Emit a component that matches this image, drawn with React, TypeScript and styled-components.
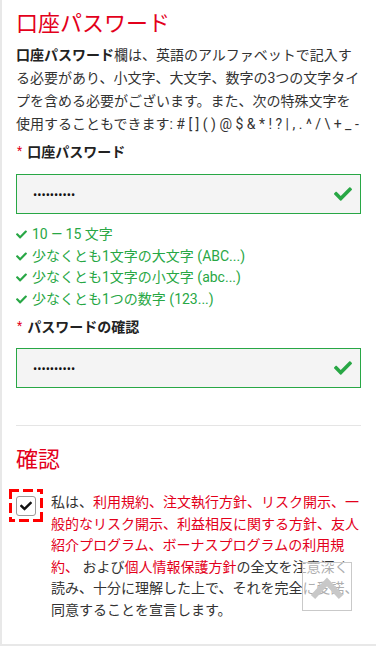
import React from "react";
import styled, { createGlobalStyle } from "styled-components";
import { FaCheck } from "react-icons/fa";

const Global = createGlobalStyle`
  html, body { margin: 0; padding: 0; background: #ffffff; }
  body {
    font-family: Roboto, "Noto Sans CJK JP", "Noto Sans", sans-serif;
    color: #333333;
    -webkit-font-smoothing: antialiased;
  }
  * { box-sizing: border-box; }
`;

const RED = "#e3001b";
const GREEN = "#28a745";
const DASH = "#ff0000";

const Card = styled.main`
  min-height: 646px;
  border-left: 2px solid #e8e8e8;
  border-bottom: 2px solid #e8e8e8;
  padding: 9px 15px 0 14px;
  background: #fff;
  display: flex;
  flex-direction: column;
`;

const Title = styled.h2<{ $top?: number }>`
  margin: ${(p) => p.$top ?? 0}px 0 0;
  font-size: 22px;
  line-height: 30px;
  font-weight: 400;
  color: ${RED};
`;

const Intro = styled.p`
  margin: 5px 0 0;
  font-size: 14px;
  line-height: 23px;
  color: #333;
  b { font-weight: 700; color: #222; }
`;

const Label = styled.label<{ $top: number }>`
  display: flex;
  align-items: baseline;
  margin-top: ${(p) => p.$top}px;
  font-size: 14px;
  line-height: 20px;
  font-weight: 700;
  color: #222;
`;

const Star = styled.span`
  color: ${RED};
  font-size: 12px;
  font-weight: 400;
  margin: 0 5px 0 1px;
  position: relative;
  top: -2px;
`;

const InputBox = styled.div<{ $top: number }>`
  margin-top: ${(p) => p.$top}px;
  height: 40px;
  border: 1px solid ${GREEN};
  background: #f4f4f4;
  display: flex;
  align-items: center;
  padding: 0 8px 0 16px;
`;

const Field = styled.input`
  flex: 1;
  min-width: 0;
  border: none;
  outline: none;
  background: transparent;
  font-family: Roboto, sans-serif;
  font-size: 12.5px;
  color: #111;
  padding: 0;
  letter-spacing: 0;
`;

const ValidIcon = styled(FaCheck)`
  color: ${GREEN};
  flex: none;
`;

const Rules = styled.ul`
  list-style: none;
  margin: 10px 0 0;
  padding: 0;
`;

const Rule = styled.li`
  display: flex;
  align-items: center;
  gap: 5px;
  font-size: 14px;
  line-height: 21.5px;
  color: ${GREEN};
`;

const Divider = styled.hr`
  margin: 37px 0 0;
  border: none;
  border-top: 1px solid #e5e5e5;
  height: 0;
`;

const ConfirmRow = styled.div`
  margin-top: 17px;
  display: flex;
  gap: 15px;
  align-items: flex-start;
`;

/* focus ring drawn over the checkbox: long red dashes */
const CheckFrame = styled.span`
  flex: none;
  margin-top: 4px;
  display: flex;
  position: relative;
  &::before {
    content: "";
    position: absolute;
    left: -7px;
    top: -7px;
    width: 34px;
    height: 33px;
    pointer-events: none;
    background:
      repeating-linear-gradient(90deg, ${DASH} 0 10px, transparent 10px 14px) left top / 100% 3px no-repeat,
      repeating-linear-gradient(270deg, ${DASH} 0 10px, transparent 10px 14px) right bottom / 100% 3px no-repeat,
      repeating-linear-gradient(180deg, ${DASH} 0 10px, transparent 10px 14px) left top / 3px 100% no-repeat,
      repeating-linear-gradient(0deg, ${DASH} 0 10px, transparent 10px 14px) right bottom / 3px 100% no-repeat;
  }
`;

const Box = styled.span`
  width: 20px;
  height: 20px;
  border: 1px solid #9a9a9a;
  border-radius: 3px;
  background: #fff;
  display: flex;
  align-items: center;
  justify-content: center;
  color: #111;
`;

const ConfirmText = styled.p`
  margin: 0;
  width: 310px;
  font-size: 14px;
  line-height: 21.5px;
  color: #333;
`;

const Link = styled.a`
  color: ${RED};
  text-decoration: none;
`;

const UpButton = styled.button`
  position: fixed;
  right: 24px;
  bottom: 38px;
  width: 50px;
  height: 49px;
  border: 1px solid #c9c9c9;
  background: rgba(255, 255, 255, 0.6);
  padding: 0;
  display: flex;
  align-items: flex-start;
  justify-content: center;
`;

export default function App() {
  return (
    <>
      <Global />
      <Card>
        <Title>口座パスワード</Title>
        <Intro>
          <b>口座パスワード</b>欄は、英語のアルファベットで記入する必要があり、小文字、大文字、数字の3つの文字タイプを含める必要がございます。また、次の特殊文字を使用することもできます: # [ ] ( ) @ $ &amp; * ! ? | , . ^ / \ + _ -
        </Intro>

        <Label $top={6}>
          <Star>*</Star>口座パスワード
        </Label>
        <InputBox $top={11}>
          <Field type="password" value="aaaaaaaaaa" readOnly />
          <ValidIcon size={18} />
        </InputBox>

        <Rules>
          {[
            "10 — 15 文字",
            "少なくとも1文字の大文字 (ABC...)",
            "少なくとも1文字の小文字 (abc...)",
            "少なくとも1つの数字 (123...)",
          ].map((t) => (
            <Rule key={t}>
              <FaCheck size={11} />
              <span>{t}</span>
            </Rule>
          ))}
        </Rules>

        <Label $top={7}>
          <Star>*</Star>パスワードの確認
        </Label>
        <InputBox $top={10}>
          <Field type="password" value="aaaaaaaaaa" readOnly />
          <ValidIcon size={18} />
        </InputBox>

        <Divider />

        <Title $top={19}>確認</Title>
        <ConfirmRow>
          <CheckFrame>
            <Box>
              <FaCheck size={12} />
            </Box>
          </CheckFrame>
          <ConfirmText>
            私は、
            <Link>
              利用規約、注文執行方針、リスク開示、一般的なリスク開示、利益相反に関する方針、友人紹介プログラム、ボーナスプログラムの利用規約、
            </Link>{" "}
            および<Link>個人情報保護方針</Link>
            の全文を注意深く読み、十分に理解した上で、それを完全に受諾、同意することを宣言します。
          </ConfirmText>
        </ConfirmRow>
      </Card>
      <UpButton aria-label="ページトップへ">
        <svg width="48" height="47" viewBox="0 0 48 47">
          <polyline
            points="10,34 24,19 38,34"
            fill="none"
            stroke="#c8c8c8"
            strokeWidth="6"
          />
        </svg>
      </UpButton>
    </>
  );
}
